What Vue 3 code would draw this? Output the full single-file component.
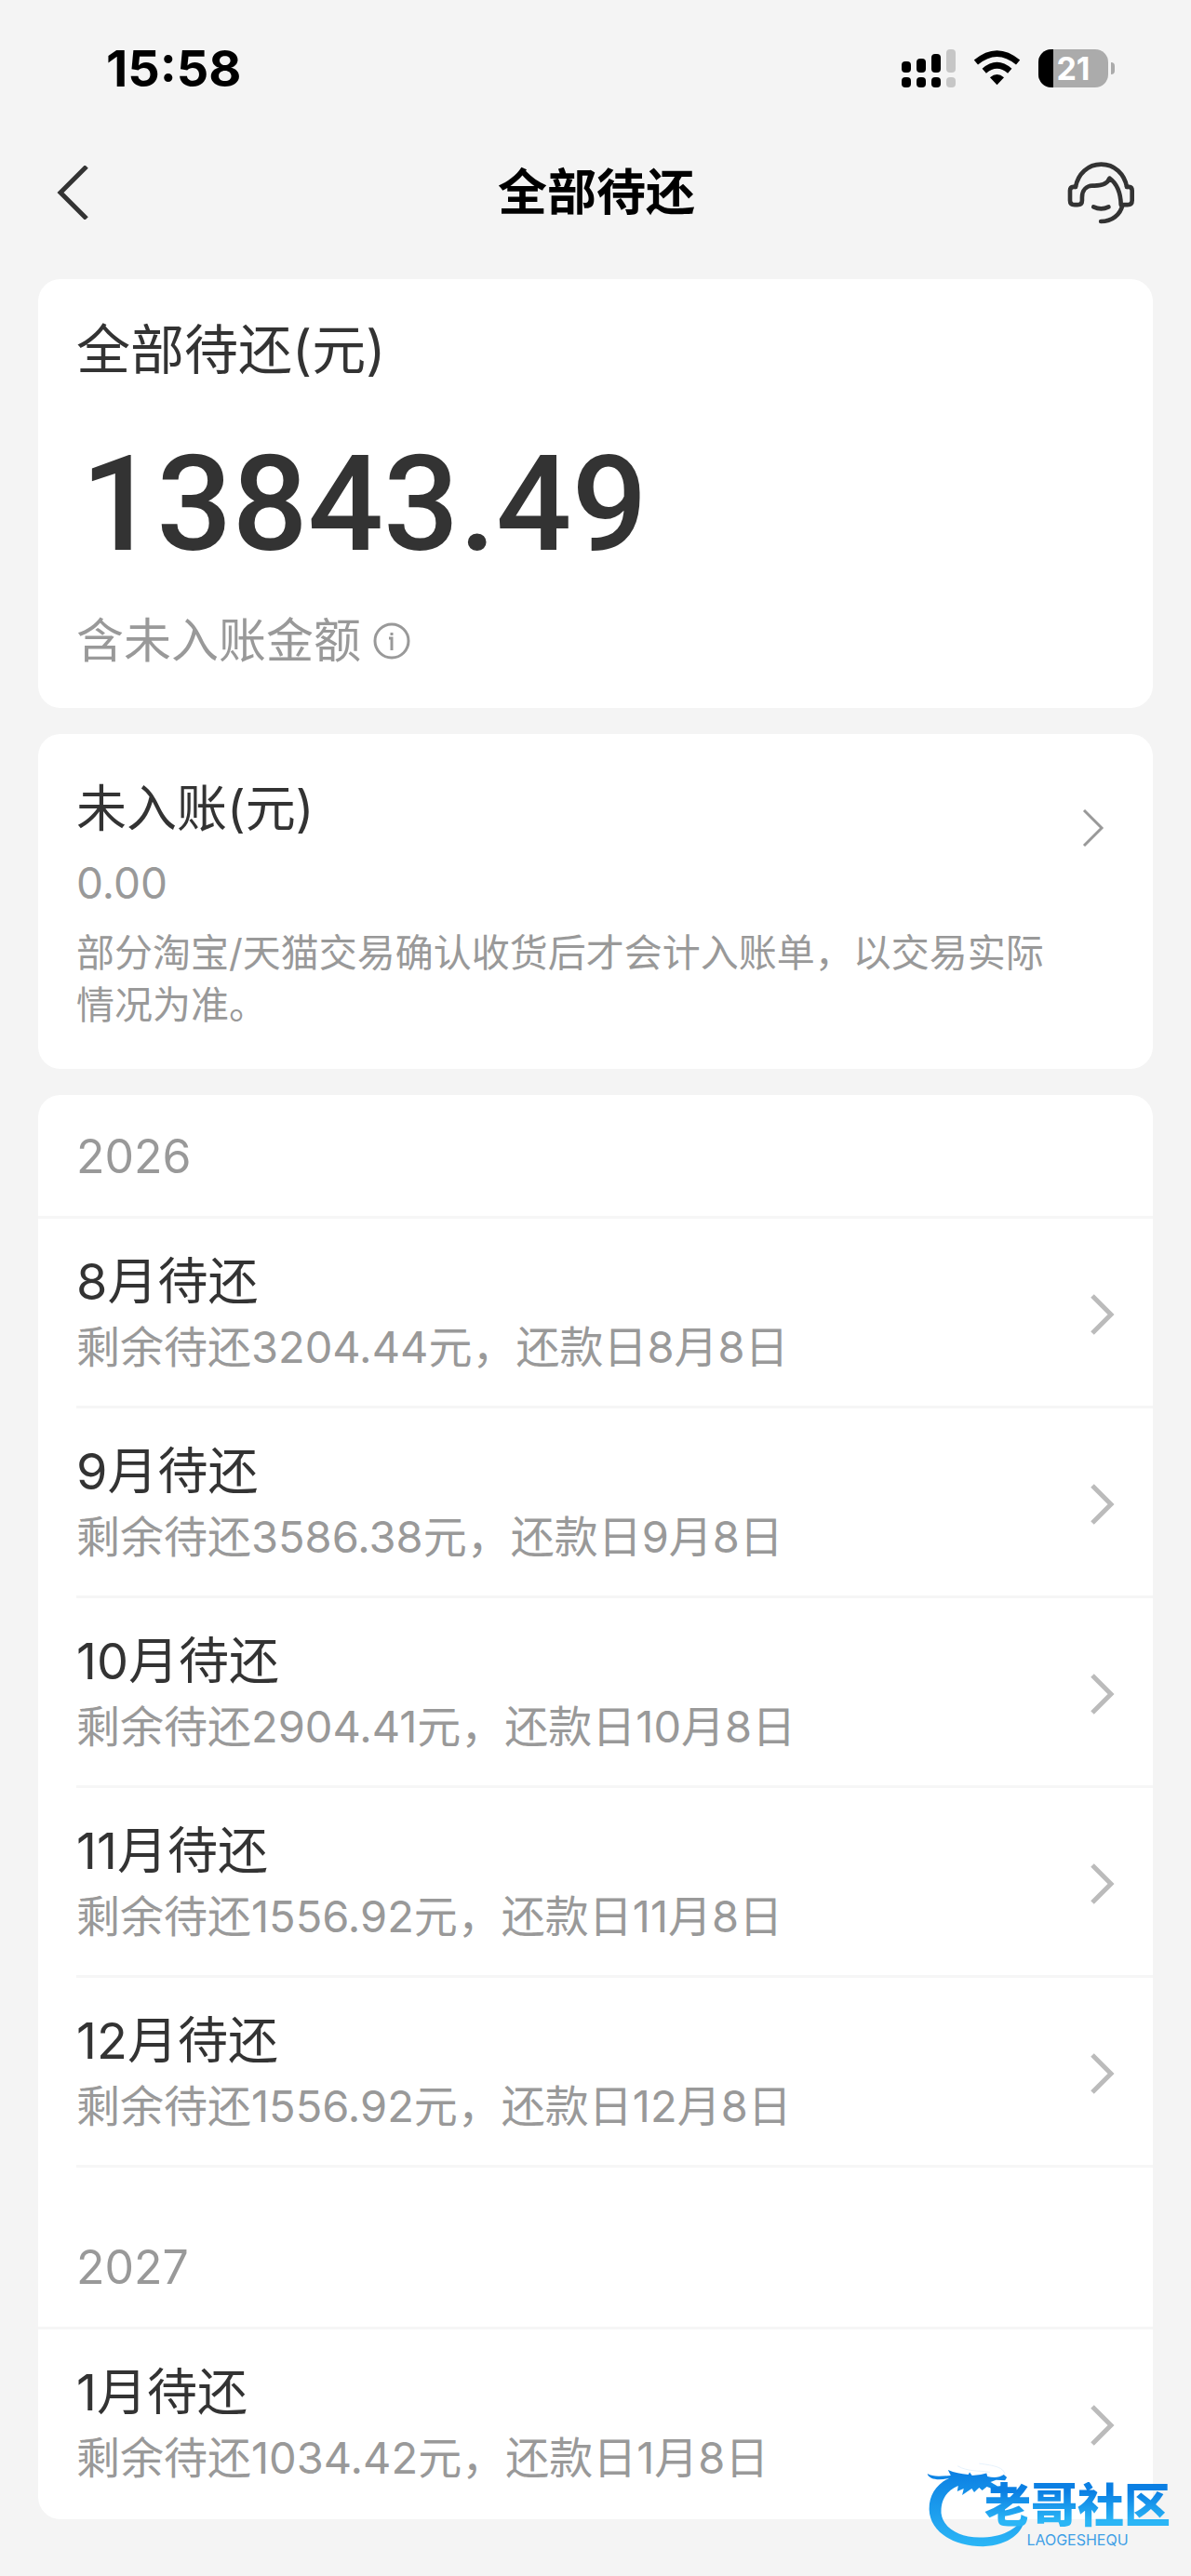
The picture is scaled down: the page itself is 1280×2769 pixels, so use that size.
<template>
  <div class="page">
    <div class="status-bar">
      <span class="time">15:58</span>
      <div class="status-icons">
        <svg class="signal" viewBox="0 0 58 41">
          <rect x="0" y="13" width="10" height="12" rx="4" />
          <rect x="16" y="10" width="10" height="15" rx="4" />
          <rect x="32" y="5" width="10" height="20" rx="4" />
          <rect class="weak" x="48" y="0" width="10" height="25" rx="4" />
          <rect x="0" y="30" width="10" height="11" rx="4" />
          <rect x="16" y="30" width="10" height="11" rx="4" />
          <rect x="32" y="30" width="10" height="11" rx="4" />
          <rect class="weak" x="48" y="30" width="10" height="11" rx="4" />
        </svg>
        <svg class="wifi" viewBox="320 70 154 116">
          <path class="arc" d="M328 110Q397 52 466 110" />
          <path class="arc" d="M355 138Q397 101 439 138" />
          <path d="M374 159Q397 140 420 159L397 184Z" />
        </svg>
        <div class="battery">
          <div class="battery-body">
            <div class="battery-level" :style="{ width: battery + '%' }"></div>
            <span>{{ battery }}</span>
          </div>
          <div class="battery-cap"></div>
        </div>
      </div>
    </div>

    <header class="nav">
      <button class="nav-btn" aria-label="返回">
        <svg class="back" viewBox="0 0 34 58">
          <path d="M32 1L4 29l28 28" />
        </svg>
      </button>
      <h1>全部待还</h1>
      <button class="nav-btn" aria-label="客服">
        <svg class="service" viewBox="84 66 218 208">
          <path d="M110 150C118 108 150 77 193 77S268 108 276 150" />
          <path
            d="M110 150H103Q92 151 92 162V194Q92 208 107 208H116Q131 208 131 194V184C131 160 145 147 165 146C192 147 213 143 220 122C245 140 256 170 257 208H278Q293 208 293 194V162Q293 151 283 150H276"
          />
          <path d="M262 209C255 240 228 262 192 262" />
          <path d="M168 215Q193 227 217 215" />
        </svg>
      </button>
    </header>

    <main class="content">
      <section class="card total">
        <h2>全部待还(元)</h2>
        <div class="amount">13843.49</div>
        <div class="hint">
          <span>含未入账金额</span>
          <button class="info" aria-label="说明">
            <svg viewBox="0 0 40 40">
              <circle cx="20" cy="20" r="18" />
              <path d="M17 17h3v13" />
              <path d="M20 11v3" />
            </svg>
          </button>
        </div>
      </section>

      <a class="card pending" href="#">
        <div class="pending-main">
          <h3>未入账(元)</h3>
          <div class="pending-value">0.00</div>
          <p>部分淘宝/天猫交易确认收货后才会计入账单，以交易实际情况为准。</p>
        </div>
        <svg class="arrow-thin" viewBox="0 0 24 40">
          <path d="M2 1l19 19L2 39" />
        </svg>
      </a>

      <section class="card bills">
        <div v-for="group in groups" :key="group.year" class="group">
          <div class="year">{{ group.year }}</div>
          <a v-for="item in group.items" :key="item.month" class="bill" href="#">
            <div class="bill-text">
              <h3>{{ item.month }}月待还</h3>
              <p>剩余待还{{ item.amount }}元，还款日{{ item.month }}月8日</p>
            </div>
            <svg class="arrow" viewBox="0 0 26 44">
              <path d="M2 2l20 20L2 42" />
            </svg>
          </a>
        </div>
      </section>
    </main>

    <div class="watermark">
      <svg class="dragon" viewBox="105 380 320 275">
        <defs>
          <linearGradient id="dragonFill" x1="0" y1="0" x2="0" y2="1">
            <stop offset="0" stop-color="#0b7fe3" />
            <stop offset="1" stop-color="#2bb6f6" />
          </linearGradient>
        </defs>
        <path
          fill="url(#dragonFill)"
          d="M107 418C125 429 150 426 183 424L174 406C195 415 215 418 240 421L244 413L252 424L280 421L299 416L302 427C320 431 340 432 355 421L365 430L359 440L330 438L312 445L335 459L356 456L352 470L318 467L300 460L285 472L275 463L259 478L251 466L220 487L225 466L204 475L207 457C165 475 150 507 152 547C157 591 207 624 276 625C350 625 397 598 421 558C424 604 376 650 288 654C184 653 115 602 113 535C112 488 135 454 178 432C148 441 111 438 107 418Z"
        />
        <path class="whisker" d="M205 393C240 412 270 407 310 413M275 385C325 391 355 398 359 420" />
      </svg>
      <div class="watermark-text">
        <strong>老哥社区</strong>
        <small>LAOGESHEQU</small>
      </div>
    </div>
  </div>
</template>

<script setup>
import { ref } from "vue"

const battery = ref(21)

const groups = ref([
  {
    year: 2026,
    items: [
      { month: 8, amount: "3204.44" },
      { month: 9, amount: "3586.38" },
      { month: 10, amount: "2904.41" },
      { month: 11, amount: "1556.92" },
      { month: 12, amount: "1556.92" }
    ]
  },
  {
    year: 2027,
    items: [{ month: 1, amount: "1034.42" }]
  }
])
</script>

<style>
body {
  margin: 0;
  background: #f4f4f4;
}
</style>

<style scoped>
.page {
  position: relative;
  padding-bottom: 62px;
  background: #f4f4f4;
  color: #333;
  font-family: Inter, "Noto Sans CJK SC", sans-serif;
}

h1,
h2,
h3,
p {
  margin: 0;
  font-weight: 400;
}

button {
  padding: 0;
  border: none;
  background: transparent;
  cursor: pointer;
}

a {
  color: inherit;
  text-decoration: none;
}

svg {
  display: block;
  flex: none;
}

.status-bar {
  height: 146px;
  padding: 0 82px 0 114px;
  display: flex;
  align-items: center;
  justify-content: space-between;
  color: #000;
}

.time {
  font-size: 54px;
  font-weight: 700;
}

.status-icons {
  display: flex;
  align-items: center;
  gap: 19px;
}

.signal {
  width: 58px;
  height: 41px;
}

.signal .weak {
  fill: #c6c6c6;
}

.wifi {
  width: 51px;
  height: 38px;
}

.wifi .arc {
  fill: none;
  stroke: #000;
  stroke-width: 20;
}

.battery {
  display: flex;
  align-items: center;
  gap: 3px;
}

.battery-body {
  position: relative;
  width: 75px;
  height: 41px;
  border-radius: 14px;
  background: #ababab;
  overflow: hidden;
  display: grid;
  place-items: center;
}

.battery-level {
  position: absolute;
  left: 0;
  top: 0;
  bottom: 0;
  background: #000;
}

.battery-body span {
  position: relative;
  color: #fff;
  font-size: 34px;
  font-weight: 700;
  line-height: 41px;
}

.battery-cap {
  width: 4px;
  height: 13px;
  border-radius: 0 6px 6px 0;
  background: #ababab;
}

.nav {
  height: 122px;
  padding: 0 59px 0 61px;
  display: grid;
  grid-template-columns: 74px 1fr 74px;
  align-items: center;
}

.nav h1 {
  color: #000;
  font-size: 53px;
  font-weight: 700;
  line-height: 80px;
  text-align: center;
}

.nav svg {
  fill: none;
  stroke: #333;
}

.back {
  width: 34px;
  height: 58px;
  stroke-width: 5;
}

.service {
  width: 73px;
  height: 69px;
  stroke-width: 14;
  stroke-linecap: round;
  stroke-linejoin: round;
}

.content {
  padding: 32px 41px 0;
  display: flex;
  flex-direction: column;
  gap: 28px;
}

.card {
  border-radius: 24px;
  background: #fff;
}

.total {
  padding: 36px 41px 37px;
}

.total h2 {
  font-size: 58px;
  line-height: 80px;
}

.amount {
  margin: 51px 0 37px 5px;
  font-family: Roboto, sans-serif;
  font-size: 143px;
  font-weight: 500;
  line-height: 150px;
}

.hint {
  display: flex;
  align-items: center;
  gap: 13px;
  color: #999;
  font-size: 51px;
  line-height: 70px;
}

.info svg {
  width: 40px;
  height: 40px;
  fill: none;
  stroke: #999;
  stroke-width: 3;
}

.pending {
  padding: 41px 52px 41px 41px;
  display: flex;
  justify-content: space-between;
}

.pending-main {
  max-width: 1050px;
}

.pending h3 {
  font-size: 54px;
  line-height: 80px;
}

.pending-value {
  color: #999;
  font-size: 46px;
  line-height: 78px;
}

.pending p {
  margin-top: 8px;
  color: #999;
  font-size: 41px;
  line-height: 56px;
}

.arrow-thin {
  width: 24px;
  height: 40px;
  margin-top: 40px;
  fill: none;
  stroke: #999;
  stroke-width: 3;
}

.year {
  padding: 33px 41px 30px;
  border-bottom: 3px solid #f6f6f6;
  color: #999;
  font-size: 50px;
  line-height: 67px;
}

.group + .group .year {
  padding-top: 74px;
}

.bill {
  margin-left: 41px;
  padding: 33px 41px 28px 0;
  border-bottom: 3px solid #f6f6f6;
  display: flex;
  align-items: center;
  justify-content: space-between;
}

.group:last-child .bill:last-child {
  border-bottom-color: transparent;
}

.bill h3 {
  font-size: 54px;
  line-height: 70px;
}

.bill p {
  color: #999;
  font-size: 47px;
  line-height: 70px;
}

.arrow {
  width: 26px;
  height: 44px;
  fill: none;
  stroke: #bbb;
  stroke-width: 5;
}

.watermark {
  position: absolute;
  right: 22px;
  bottom: 32px;
  display: flex;
  align-items: flex-end;
}

.dragon {
  width: 106px;
  height: 92px;
}

.whisker {
  fill: none;
  stroke: #d9ecfb;
  stroke-width: 2;
}

.watermark-text {
  margin-left: -44px;
  display: flex;
  flex-direction: column;
  align-items: center;
  gap: 4px;
}

.watermark strong {
  background: linear-gradient(#0b7fe3 20%, #2bb6f6 85%);
  background-clip: text;
  color: transparent;
  font-size: 50px;
  font-weight: 900;
  line-height: 50px;
}

.watermark small {
  color: #3f9fe6;
  font-size: 16px;
  line-height: 16px;
}
</style>
